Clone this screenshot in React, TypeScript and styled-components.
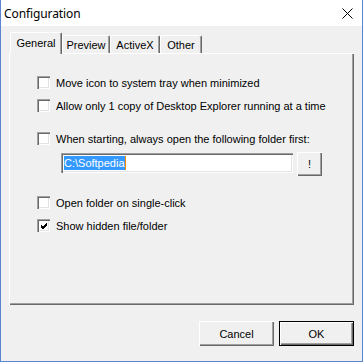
import React from "react";
import styled, { createGlobalStyle } from "styled-components";

const Global = createGlobalStyle`
  html, body { margin: 0; padding: 0; background: #f0f0f0; }
  body { font-family: "Liberation Sans", Arial, sans-serif; }
`;

const Window = styled.div`
  width: 363px;
  height: 362px;
  box-sizing: border-box;
  border: 1px solid #5b84d2;
  border-top: none;
  background: #f0f0f0;
  display: flex;
  flex-direction: column;
  overflow: hidden;
`;

const TitleBar = styled.div`
  height: 26px;
  background: #ffffff;
  display: flex;
  align-items: center;
  justify-content: space-between;
  padding: 0 9px 0 3px;
  flex-shrink: 0;
`;

const Title = styled.span`
  font-family: "Noto Sans", "Open Sans", sans-serif;
  font-size: 12px;
  color: #000;
  letter-spacing: -0.1px;
`;

const Body = styled.div`
  flex: 1;
  display: flex;
  flex-direction: column;
  padding: 7px 8px 14px 8px;
`;

const TabStrip = styled.div`
  height: 21px;
  display: flex;
  align-items: flex-end;
  padding-left: 1px;
  position: relative;
  z-index: 2;
  margin-bottom: -1px;
`;

const Tab = styled.div<{ $active?: boolean; $w: number }>`
  box-sizing: border-box;
  width: ${(p) => p.$w}px;
  height: ${(p) => (p.$active ? 22 : 18)}px;
  margin-bottom: ${(p) => (p.$active ? 0 : 1)}px;
  background: #f0f0f0;
  border-top: 1px solid #ffffff;
  border-left: 1px solid #ffffff;
  border-right: 1px solid #696969;
  box-shadow: inset -1px 0 0 #a0a0a0;
  display: flex;
  align-items: center;
  justify-content: center;
  font-size: 11px;
  color: #000;
  padding-bottom: ${(p) => (p.$active ? 2 : 0)}px;
  border-radius: 2px 2px 0 0;
`;

const Panel = styled.div`
  height: 252px;
  box-sizing: border-box;
  background: #f0f0f0;
  box-shadow: inset 1px 1px 0 #ffffff, inset -1px -1px 0 #696969,
    inset -2px -2px 0 #a0a0a0;
  padding: 23px 0 0 28px;
  display: flex;
  flex-direction: column;
`;

const Row = styled.label<{ $mt?: number }>`
  display: flex;
  align-items: center;
  gap: 6px;
  height: 13px;
  margin-top: ${(p) => p.$mt ?? 0}px;
  font-size: 11px;
  color: #000;
  white-space: nowrap;
`;

const Box = styled.span`
  width: 13px;
  height: 13px;
  box-sizing: border-box;
  background: #ffffff;
  box-shadow: inset 1px 1px 0 #a0a0a0, inset 2px 2px 0 #696969,
    inset -1px -1px 0 #ffffff, inset -2px -2px 0 #e3e3e3;
  display: flex;
  align-items: center;
  justify-content: center;
  flex-shrink: 0;
`;

const FolderRow = styled.div`
  display: flex;
  align-items: flex-start;
  gap: 4px;
  margin-top: 7px;
  margin-left: 24px;
`;

const Edit = styled.div`
  width: 232px;
  height: 20px;
  margin-top: 1px;
  box-sizing: border-box;
  background: #ffffff;
  box-shadow: inset 1px 1px 0 #a0a0a0, inset 2px 2px 0 #696969,
    inset -1px -1px 0 #ffffff, inset -2px -2px 0 #e3e3e3;
  padding: 3px 0 0 3px;
  font-size: 11px;
  display: flex;
  align-items: flex-start;
`;

const Selected = styled.span`
  background: #3399ff;
  color: #ffffff;
  line-height: 14px;
  border-right: 1px solid #ff8a00;
`;

const Button = styled.button<{ $default?: boolean; $w: number; $h: number }>`
  width: ${(p) => p.$w}px;
  height: ${(p) => p.$h}px;
  box-sizing: border-box;
  background: #f0f0f0;
  border: ${(p) => (p.$default ? "1px solid #000" : "none")};
  box-shadow: inset 1px 1px 0 #ffffff, inset -1px -1px 0 #696969,
    inset -2px -2px 0 #a0a0a0;
  font-family: "Liberation Sans", Arial, sans-serif;
  font-size: 11px;
  color: #000;
  padding: 0;
  display: flex;
  align-items: center;
  justify-content: center;
`;

const ButtonRow = styled.div`
  display: flex;
  justify-content: flex-end;
  gap: 5px;
  margin-top: 16px;
`;

const Check = () => (
  <svg width="9" height="9" viewBox="0 0 9 9" style={{ marginLeft: 1, marginTop: 1 }}>
    <path d="M1 4 L3 6 L7 2 M1 5 L3 7 L7 3 M1 3 L3 5 L7 1" stroke="#000" strokeWidth="1" fill="none" shapeRendering="crispEdges" />
  </svg>
);

const CheckRow: React.FC<{ label: string; checked?: boolean; mt?: number }> = ({
  label,
  checked,
  mt,
}) => (
  <Row $mt={mt}>
    <Box>{checked && <Check />}</Box>
    {label}
  </Row>
);

export default function App() {
  return (
    <>
      <Global />
      <Window>
        <TitleBar>
          <Title>Configuration</Title>
          <svg width="11" height="11" viewBox="0 0 11 11">
            <path d="M0.5 0.5 L10.5 10.5 M10.5 0.5 L0.5 10.5" stroke="#000" strokeWidth="1" />
          </svg>
        </TitleBar>
        <Body>
          <TabStrip>
            <Tab $active $w={52}>General</Tab>
            <Tab $w={48}>Preview</Tab>
            <Tab $w={50}>ActiveX</Tab>
            <Tab $w={42}>Other</Tab>
          </TabStrip>
          <Panel>
            <CheckRow label="Move icon to system tray when minimized" />
            <CheckRow label="Allow only 1 copy of Desktop Explorer running at a time" mt={10} />
            <CheckRow label="When starting, always open the following folder first:" mt={20} />
            <FolderRow>
              <Edit>
                <Selected>C:\Softpedia</Selected>
              </Edit>
              <Button $w={25} $h={24}>!</Button>
            </FolderRow>
            <CheckRow label="Open folder on single-click" mt={20} />
            <CheckRow label="Show hidden file/folder" checked mt={10} />
          </Panel>
          <ButtonRow>
            <Button $w={75} $h={25}>Cancel</Button>
            <Button $default $w={75} $h={25}>OK</Button>
          </ButtonRow>
        </Body>
      </Window>
    </>
  );
}
